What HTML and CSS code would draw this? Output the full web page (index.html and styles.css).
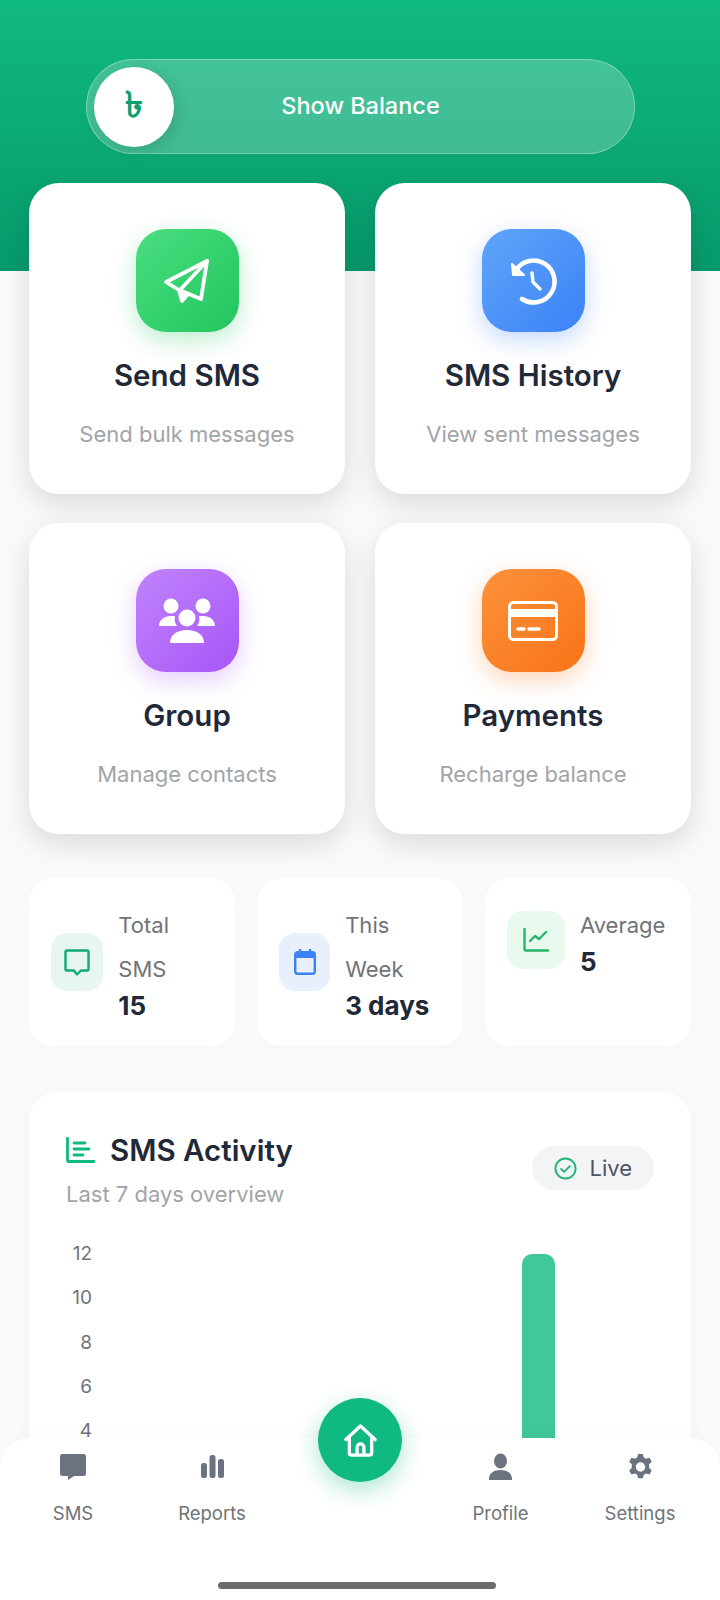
FILE: index.html
```html
<!DOCTYPE html>
<html lang="en">
  <head>
    <meta charset="UTF-8" />
    <meta name="viewport" content="width=device-width, initial-scale=1.0" />
    <title>SMS Dashboard</title>
    <link rel="stylesheet" href="styles.css">
  </head>
  <body>
    <header class="top">
      <div class="balance">
        <div class="balance-knob">৳</div>
        <span class="balance-text">Show Balance</span>
      </div>
    </header>

    <main class="content">
      <section class="actions">
        <div class="action">
          <div class="action-icon green">
            <svg viewBox="27 26 50 50" width="50" height="50" fill="none" stroke="#fff" stroke-width="3.800" stroke-linejoin="round" stroke-linecap="round">
              <path d="M72 31 31 52l13 8 22 9z" />
              <path d="M72 31 45 60" />
              <path d="M44 60l3 11 6-7z" fill="#fff" />
            </svg>
          </div>
          <h2>Send SMS</h2>
          <p>Send bulk messages</p>
        </div>
        <div class="action">
          <div class="action-icon blue">
            <svg viewBox="26 24 52 52" width="52" height="52" fill="none" stroke="#fff" stroke-width="4.600" stroke-linecap="round" stroke-linejoin="round">
              <path d="M35 39A21 21 0 1 1 41 68" />
              <path d="M31 33l1 11h11z" fill="#fff" stroke-width="2" />
              <path d="M51 42l1 9 7 7" stroke-width="3.400" />
            </svg>
          </div>
          <h2>SMS History</h2>
          <p>View sent messages</p>
        </div>
        <div class="action">
          <div class="action-icon purple">
            <svg viewBox="23 27 58 47" width="58" height="47" fill="#fff">
              <circle cx="36" cy="36" r="7.500" />
              <circle cx="68" cy="36" r="7.500" />
              <path d="M24 56c0-6 5-10 12-10h4c-1 4 0 7 2 10zM80 56c0-6-5-10-12-10h-4c1 4 0 7-2 10z" />
              <circle cx="52" cy="48" r="8.500" />
              <path d="M35 73c0-8 7-13 17-13s17 5 17 13z" />
            </svg>
          </div>
          <h2>Group</h2>
          <p>Manage contacts</p>
        </div>
        <div class="action">
          <div class="action-icon orange">
            <svg viewBox="0 0 50 40" width="50" height="40" fill="none" stroke="#fff" stroke-width="3">
              <rect x="1.500" y="1.500" width="47" height="37" rx="4" />
              <path d="M2 12h46" stroke-width="8" />
              <path d="M10 28h6M21 28h10" stroke-width="3.500" stroke-linecap="round" />
            </svg>
          </div>
          <h2>Payments</h2>
          <p>Recharge balance</p>
        </div>
      </section>

      <section class="stats">
        <div class="stat">
          <div class="stat-row">
            <div class="stat-icon tint-teal">
              <svg viewBox="0 0 26 27" width="26" height="27" fill="none" stroke="#10a97a" stroke-width="2.400" stroke-linejoin="round">
                <path d="M3 1.500h20a1.500 1.500 0 0 1 1.500 1.500v17a1.500 1.500 0 0 1-1.500 1.500h-6l-4 4-3-4H3a1.500 1.500 0 0 1-1.500-1.500V3A1.500 1.500 0 0 1 3 1.500z" />
              </svg>
            </div>
            <div class="stat-text">
              <div class="stat-label">Total SMS</div>
              <div class="stat-value">15</div>
            </div>
          </div>
        </div>
        <div class="stat">
          <div class="stat-row">
            <div class="stat-icon tint-blue">
              <svg viewBox="0 0 22 26" width="22" height="26">
                <path d="M6 0v5M16 0v5" stroke="#3b82f6" stroke-width="2.400" />
                <rect x="1.200" y="3.200" width="19.600" height="21.600" rx="2.500" fill="none" stroke="#3b82f6" stroke-width="2.400" />
                <path d="M1 4h20v5H1z" fill="#3b82f6" />
              </svg>
            </div>
            <div class="stat-text">
              <div class="stat-label">This Week</div>
              <div class="stat-value">3 days</div>
            </div>
          </div>
        </div>
        <div class="stat">
          <div class="stat-row">
            <div class="stat-icon tint-green">
              <svg viewBox="0 0 26 24" width="26" height="24" fill="none" stroke="#22b86a" stroke-width="2.400" stroke-linecap="round" stroke-linejoin="round">
                <path d="M1.500 1v20a1.500 1.500 0 0 0 1.500 1.500h22" />
                <path d="M7 13l5-5 4 3 7-7" />
              </svg>
            </div>
            <div class="stat-text">
              <div class="stat-label">Average</div>
              <div class="stat-value">5</div>
            </div>
          </div>
        </div>
      </section>

      <section class="chart-card">
        <div class="chart-head">
          <div>
            <h3 class="chart-title">
              <svg viewBox="0 0 30 26" width="30" height="26" fill="none" stroke="#10b981" stroke-width="2.800" stroke-linecap="round">
                <path d="M1.500 1v22a1.500 1.500 0 0 0 1.500 1.500h25" />
                <path d="M8 6h11M8 12h15M8 18h9" />
              </svg>
              SMS Activity
            </h3>
            <p class="chart-sub">Last 7 days overview</p>
          </div>
          <div class="live">
            <svg viewBox="0 0 24 24" width="23" height="23" fill="none" stroke="#22b573" stroke-width="2" stroke-linecap="round" stroke-linejoin="round">
              <circle cx="12" cy="12" r="10.500" />
              <path d="M7.500 12.500l3 3 6-6" />
            </svg>
            Live
          </div>
        </div>
        <div class="chart">
          <div class="axis">
            <span>12</span>
            <span>10</span>
            <span>8</span>
            <span>6</span>
            <span>4</span>
          </div>
          <div class="bar"></div>
        </div>
      </section>
    </main>

    <nav class="nav">
      <div class="nav-row">
        <div class="nav-item">
          <svg viewBox="0 0 26 30" width="26" height="30" fill="#6b7280">
            <path d="M2.500 2h21A2.500 2.500 0 0 1 26 4.500v17a2.500 2.500 0 0 1-2.500 2.500H14l-6 4v-4H2.500A2.500 2.500 0 0 1 0 21.500v-17A2.500 2.500 0 0 1 2.500 2z" />
          </svg>
          <span>SMS</span>
        </div>
        <div class="nav-item">
          <svg viewBox="0 0 23 30" width="23" height="30" fill="#6b7280">
            <rect x="0" y="11" width="6" height="15" rx="2.500" />
            <rect x="8.500" y="3" width="6" height="23" rx="2.500" />
            <rect x="17" y="7" width="6" height="19" rx="2.500" />
          </svg>
          <span>Reports</span>
        </div>
        <div class="nav-gap"></div>
        <div class="nav-item">
          <svg viewBox="0 0 23 30" width="23" height="30" fill="#6b7280">
            <ellipse cx="11.500" cy="9" rx="6.500" ry="7.500" />
            <path d="M0 27c0-6 5-9 11.500-9S23 21 23 27v1H0z" />
          </svg>
          <span>Profile</span>
        </div>
        <div class="nav-item">
          <svg viewBox="0 -2 26 32" width="25" height="30" fill="#6b7280" fill-rule="evenodd">
            <path d="M10.500 0h5l1 3.800 2.300 1.300 3.800-1 2.400 4.200-2.800 2.800v3.800l2.800 2.800-2.400 4.200-3.800-1-2.300 1.300-1 3.800h-5l-1-3.800-2.300-1.300-3.800 1L.9 17.700l2.800-2.800v-3.800L.9 8.300l2.400-4.200 3.800 1 2.300-1.300zM13 9a5 5 0 1 0 0 10 5 5 0 0 0 0-10z" />
          </svg>
          <span>Settings</span>
        </div>
      </div>
      <div class="nav-pill"></div>
      <button class="home">
        <svg viewBox="0 0 34 34" width="33" height="33" fill="none" stroke="#fff" stroke-width="3.400" stroke-linejoin="round" stroke-linecap="round">
          <path d="M2 16 17 2l15 14" />
          <path d="M5.500 14v16a2 2 0 0 0 2 2h19a2 2 0 0 0 2-2V14" />
          <path d="M13.500 31v-7a3.500 3.500 0 0 1 7 0v7" />
        </svg>
      </button>
    </nav>
  </body>
</html>
```

FILE: styles.css
```css
* {
  box-sizing: border-box;
}
html,
body {
  height: 1600px;
  overflow: hidden;
}
body {
  margin: 0;
  position: relative;
  background-color: #f8fafc;
  font-family: Inter, "Noto Sans", sans-serif;
  color: #1f2937;
}

/* green top */
.top {
  height: 271px;
  padding-top: 59px;
  background: linear-gradient(180deg, #10b981, #079a6c);
}
.balance {
  position: relative;
  width: 549px;
  height: 95px;
  margin-left: 86px;
  display: flex;
  align-items: center;
  justify-content: center;
  border: 1px solid rgba(255, 255, 255, 0.3);
  border-radius: 48px;
  background-color: rgba(255, 255, 255, 0.22);
}
.balance-knob {
  position: absolute;
  left: 7px;
  top: 7px;
  width: 80px;
  height: 80px;
  display: flex;
  align-items: center;
  justify-content: center;
  border-radius: 50%;
  background-color: #fff;
  box-shadow: 4px 4px 16px rgba(0, 0, 0, 0.12);
  color: #0b9f70;
  font-family: "Noto Sans", "DejaVu Sans", sans-serif;
  font-size: 36px;
  font-weight: 700;
}
.balance-text {
  margin-top: -2px;
  color: #fff;
  font-size: 23.500px;
  font-weight: 500;
}

.content {
  padding: 0 29px;
  margin-top: -88px;
}

/* action cards */
.actions {
  display: grid;
  grid-template-columns: 316px 316px;
  gap: 29px 30px;
}
.action {
  height: 311px;
  padding-top: 46px;
  border-radius: 30px;
  background-color: #fff;
  box-shadow: 0 10px 30px rgba(0, 0, 0, 0.13);
  text-align: center;
}
.action-icon {
  width: 103px;
  height: 103px;
  margin: 0 auto;
  display: flex;
  align-items: center;
  justify-content: center;
  border-radius: 30px;
}
.green {
  background: linear-gradient(135deg, #4ade80, #22c55e);
  box-shadow: 0 8px 24px rgba(34, 197, 94, 0.3);
}
.blue {
  background: linear-gradient(135deg, #60a5fa, #3b82f6);
  box-shadow: 0 8px 24px rgba(59, 130, 246, 0.3);
}
.purple {
  background: linear-gradient(135deg, #c084fc, #a855f7);
  box-shadow: 0 8px 24px rgba(168, 85, 247, 0.3);
}
.orange {
  background: linear-gradient(135deg, #fb923c, #f97316);
  box-shadow: 0 8px 24px rgba(249, 115, 22, 0.3);
}
.action h2 {
  margin: 26px 0 0;
  font-size: 29.500px;
  line-height: 34px;
  font-weight: 600;
}
.action p {
  margin: 29px 0 0;
  font-size: 22px;
  line-height: 26px;
  color: #a1a4a9;
}

/* small stats */
.stats {
  display: flex;
  gap: 22px;
  margin-top: 44px;
}
.stat {
  flex: 1;
  height: 168px;
  padding: 25px 22px 24px;
  border-radius: 24px;
  background-color: #fff;
  box-shadow: 0 4px 16px rgba(0, 0, 0, 0.02);
}
.stat-row {
  display: flex;
  align-items: center;
  gap: 15px;
}
.stat-icon {
  width: 58px;
  height: 58px;
  display: flex;
  align-items: center;
  justify-content: center;
  border-radius: 16px;
}
.tint-teal {
  background-color: #e7f6f0;
}
.tint-blue {
  background-color: #e9f0fd;
}
.tint-green {
  background-color: #e8f9ee;
}
.stat-label {
  font-size: 22px;
  line-height: 44px;
  color: #707377;
}
.stat-value {
  font-size: 26px;
  line-height: 30px;
  font-weight: 700;
}

/* chart */
.chart-card {
  height: 520px;
  margin-top: 45px;
  padding: 37px 37px;
  border-radius: 30px;
  background-color: #fff;
  box-shadow: 0 4px 20px rgba(0, 0, 0, 0.03);
}
.chart-head {
  display: flex;
  justify-content: space-between;
  align-items: flex-start;
}
.chart-title {
  display: flex;
  align-items: center;
  gap: 14px;
  margin: 0;
  font-size: 29.500px;
  line-height: 44px;
  font-weight: 600;
}
.chart-sub {
  margin: 4px 0 0;
  font-size: 22px;
  line-height: 36px;
  color: #a1a4a9;
}
.live {
  display: flex;
  align-items: center;
  gap: 12px;
  height: 44px;
  margin-top: 18px;
  padding: 0 22px;
  border-radius: 22px;
  background-color: #f3f4f6;
  font-size: 22px;
  color: #4b5563;
}
.chart {
  position: relative;
  margin-top: 20px;
  display: flex;
}
.axis {
  width: 26px;
  display: flex;
  flex-direction: column;
  align-items: flex-end;
  font-size: 19px;
  line-height: 44.300px;
  color: #707377;
}
.bar {
  width: 33px;
  height: 400px;
  margin: 22px 0 0 430px;
  border-radius: 10px 10px 0 0;
  background-color: rgba(16, 185, 129, 0.8);
}

/* bottom nav */
.nav {
  position: absolute;
  left: 0;
  right: 0;
  bottom: 0;
  height: 162px;
  border-radius: 30px 30px 0 0;
  background-color: #fff;
  box-shadow: 0 -4px 20px rgba(0, 0, 0, 0.02);
}
.nav-row {
  display: grid;
  grid-template-columns: 146px 132px 163px 119px 160px;
  padding-top: 14px;
}
.nav-item {
  display: flex;
  flex-direction: column;
  align-items: center;
  gap: 20px;
  font-size: 18.500px;
  line-height: 22px;
  color: #707377;
}
.nav-pill {
  width: 278px;
  height: 7px;
  margin: 58px 0 0 218px;
  border-radius: 4px;
  background-color: #6b6b6f;
}
.home {
  position: absolute;
  left: 318px;
  top: -40px;
  width: 84px;
  height: 84px;
  display: flex;
  align-items: center;
  justify-content: center;
  padding: 0;
  border: none;
  border-radius: 50%;
  background-color: #10b981;
  box-shadow: 0 8px 24px rgba(16, 185, 129, 0.35);
}
```
